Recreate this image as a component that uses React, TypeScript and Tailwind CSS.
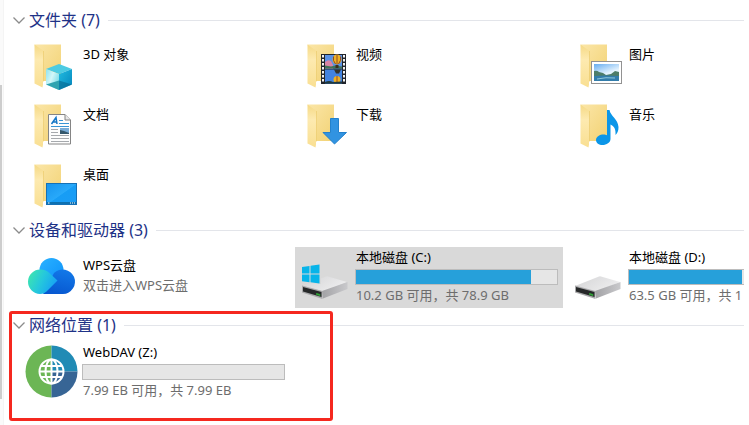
import { useState, type ReactNode } from "react";

function Folder({ id }: { id: string }) {
  return (
    <>
      <defs>
        <linearGradient id={`${id}-back`} x1="0" y1="0" x2="1" y2="1">
          <stop offset="0" stopColor="#fbe6a8" />
          <stop offset="1" stopColor="#f2d274" />
        </linearGradient>
        <linearGradient id={`${id}-flap`} x1="0" y1="0" x2="0" y2="1">
          <stop offset="0" stopColor="#f5d985" />
          <stop offset="0.35" stopColor="#fdeab0" />
          <stop offset="1" stopColor="#f9df92" />
        </linearGradient>
      </defs>
      <path d="M12.5 7.5H39V44H21Z" fill={`url(#${id}-back)`} />
      <path d="M12.5 7.5 21.5 14V45L20.5 50.5 12.5 46.5Z" fill={`url(#${id}-flap)`} />
      <path d="M21.5 14V44" stroke="#e9c766" strokeWidth="0.6" />
      <path d="M21 45h4v5l-4 1Z" fill="#fff" />
    </>
  );
}

function Icon({ children }: { children: ReactNode }) {
  return (
    <svg viewBox="0 0 60 60" className="size-[60px] shrink-0" aria-hidden="true">
      {children}
    </svg>
  );
}

const objectsIcon = (
  <Icon>
    <Folder id="objects" />
    <defs>
      <linearGradient id="cube-left" x1="0" y1="0" x2="1" y2="0.6">
        <stop offset="0" stopColor="#8fe3ee" />
        <stop offset="0.5" stopColor="#d3f7f9" />
        <stop offset="1" stopColor="#78dbe8" />
      </linearGradient>
      <linearGradient id="cube-right" x1="0" y1="0" x2="1" y2="1">
        <stop offset="0" stopColor="#22bce0" />
        <stop offset="1" stopColor="#0486bd" />
      </linearGradient>
    </defs>
    <path d="M24 32 37 27 50 32 37 37Z" fill="#4ccbe2" />
    <path d="M24 32 37 37V53L24 47.5Z" fill="url(#cube-left)" />
    <path d="M37 37 50 32V47.5L37 53Z" fill="url(#cube-right)" />
    <path d="M24 47.5 37 43.5V53Z" fill="#2fa3b0" />
    <path d="M37 43.5 50 47.5 37 53Z" fill="#05668e" opacity="0.6" />
  </Icon>
);

const sprockets = [18, 22, 26, 30, 34, 38, 42];

const videoIcon = (
  <Icon>
    <Folder id="video" />
    <rect x="26" y="17" width="25" height="30" fill="#20242b" />
    {sprockets.map((y) => (
      <g key={y} fill="#f2f2f2">
        <rect x="27" y={y} width="2" height="2.5" />
        <rect x="48" y={y} width="2" height="2.5" />
      </g>
    ))}
    <rect x="30" y="18" width="17" height="13.5" fill="#5a92e6" />
    <path d="M30 25q3-3 6-1l2 4v3.5h-8Z" fill="#d984a5" />
    <path d="M30 28.500l6 1 4-1 7 1v2H30Z" fill="#3f7358" />
    <ellipse cx="42" cy="22.500" rx="4.500" ry="5" fill="#eeb124" />
    <path d="M42 17.500v10M38.500 19.500q-1 4 2 7.500M45.500 19.500q1 4-2 7.500" fill="none" stroke="#8f4a24" />
    <path d="M40.500 28h3v3h-3Z" fill="#3a2f20" />
    <rect x="30" y="32.500" width="17" height="14" fill="#4383e0" />
    <path d="M39 32.500h7l-2 4h-3Z" fill="#35342c" />
    <ellipse cx="42" cy="42.500" rx="3.500" ry="3.500" fill="#eeb124" />
    <path d="M42 39v7" stroke="#9b4d22" />
    <path d="M30 45q4-2 8 0l9-.5v2H30Z" fill="#213a3d" />
  </Icon>
);

const picturesIcon = (
  <Icon>
    <Folder id="pictures" />
    <defs>
      <linearGradient id="sky" x1="0" y1="0" x2="0.5" y2="1">
        <stop offset="0" stopColor="#67adf0" />
        <stop offset="0.65" stopColor="#e4f3ff" />
      </linearGradient>
    </defs>
    <rect x="23.5" y="24.5" width="30" height="22" fill="#fff" stroke="#929292" />
    <rect x="26" y="27" width="25" height="17" fill="url(#sky)" />
    <path d="M26 34q3-1 5 1l4 1 3 2 5-1 4-3 4 1v5H26Z" fill="#4d7d69" />
    <path d="M26 39q11-1 25 0v5H26Z" fill="#337dab" />
    <path d="M29 42q9-2 18-1" stroke="#8dc7dc" fill="none" />
  </Icon>
);

const documentsIcon = (
  <Icon>
    <Folder id="documents" />
    <path d="M26.5 17.5H43L48.5 23V47H26.5Z" fill="#fdfdfd" stroke="#858585" />
    <path d="M43 17.5V23H48.5" fill="#e7e7e7" stroke="#858585" />
    <path d="M29.5 27 34 20.5 35 27M31 25h4" stroke="#1476c6" strokeWidth="1.5" fill="none" />
    <path d="M37 23.5h4M37 26.5h10M29 29.5h18" stroke="#3995d5" />
    <path d="M29 32.5h7M29 35.5h7M29 38.5h18M29 41.5h18M29 44.5h18" stroke="#a6a9ad" />
    <rect x="38" y="31" width="9" height="6" fill="#79acd7" />
    <path d="M38 33l4 1 5 2v1h-9Z" fill="#34576b" />
  </Icon>
);

const downloadsIcon = (
  <Icon>
    <Folder id="downloads" />
    <path d="M35.5 21.5h8v14h8L39.5 47 28 35.5h7.5Z" fill="#3193e1" stroke="#2381cc" />
  </Icon>
);

const musicIcon = (
  <Icon>
    <Folder id="music" />
    <path
      d="M39 13h2.5c1 6 8.500 9 9 17 .2 4-1.500 6.500-3 8 .5-6-1.500-9-5-10.500V42c0 3.500-4 6-8 6-3.500 0-6.500-2-6.500-5 0-3.500 4-5.500 7.500-5.500 1.500 0 2.500.2 3.500.7Z"
      fill="#0b96e8"
    />
  </Icon>
);

const desktopIcon = (
  <Icon>
    <Folder id="desktop" />
    <defs>
      <linearGradient id="screen" x1="0" y1="0" x2="1" y2="1">
        <stop offset="0" stopColor="#1794ed" />
        <stop offset="0.5" stopColor="#28a9fa" />
        <stop offset="0.52" stopColor="#179df5" />
        <stop offset="1" stopColor="#1b9cf5" />
      </linearGradient>
    </defs>
    <rect x="24.500" y="26.500" width="30" height="21" fill="url(#screen)" stroke="#1571b7" />
    <path d="M25 46h29" stroke="#0b6299" strokeWidth="1.500" />
    <path d="M26 46h1.500M48 46h1M50 46h1M52 46h1" stroke="#fff" />
  </Icon>
);

const cloudIcon = (
  <Icon>
    <defs>
      <linearGradient id="cloud-top" x1="0" y1="0" x2="1" y2="1">
        <stop offset="0" stopColor="#2ab2ff" />
        <stop offset="1" stopColor="#0d91fa" />
      </linearGradient>
      <linearGradient id="cloud-right" x1="0.600" y1="0" x2="0.300" y2="1">
        <stop offset="0" stopColor="#1278e8" />
        <stop offset="1" stopColor="#0757d0" />
      </linearGradient>
      <linearGradient id="cloud-left" x1="0" y1="0.300" x2="1" y2="0.700">
        <stop offset="0" stopColor="#3ce4b1" />
        <stop offset="0.450" stopColor="#25c8dc" />
        <stop offset="1" stopColor="#159cf8" />
      </linearGradient>
    </defs>
    <circle cx="29.500" cy="23" r="12" fill="url(#cloud-top)" />
    <path d="M21 47h20a12.300 12.300 0 1 0-9-21Z" fill="url(#cloud-right)" />
    <path d="M18.500 22.500c4 0 7 1.500 9.500 4l7.500 7L26 43c-2.500 2.500-4.500 4-8 4a12.200 12.200 0 0 1 .5-24.500Z" fill="url(#cloud-left)" />
  </Icon>
);

function DriveIcon({ id, system }: { id: string; system?: boolean }) {
  return (
    <Icon>
      <defs>
        <linearGradient id={`${id}-top`} x1="0" y1="0" x2="1" y2="0.500">
          <stop offset="0" stopColor="#d3d3d5" />
          <stop offset="1" stopColor="#ededee" />
        </linearGradient>
        <linearGradient id={`${id}-side`} x1="0" y1="0" x2="1" y2="0">
          <stop offset="0" stopColor="#a2a2a5" />
          <stop offset="1" stopColor="#c9c9cc" />
        </linearGradient>
      </defs>
      <path d="M7 39 31 29.500q1-.5 2 0L52 35 29 44.500Z" fill={`url(#${id}-top)`} />
      <path d="M27 44 52.500 35v7L28 51.500Z" fill={`url(#${id}-side)`} />
      <path d="M7 38.500 27.500 44V52L7 45.500Z" fill="#a9a9ab" />
      <path d="M8 40 26.500 45v5L8 44.500Z" fill="#262829" />
      <path d="M21.500 46.500 25 47.500v1L21.500 47.500Z" fill="#41d24b" stroke="#2e9b34" />
      {system && (
        <>
          <path d="M6 18H26V37L6 36Z" fill="#d9d9d9" />
          <path d="M7 20 14.500 19V26.500H7ZM15.500 18.800 24.500 17.500V26.500H15.500ZM7 27.500H14.500V35.200L7 34.200ZM15.500 27.500H24.500V36.500L15.500 35.300Z" fill="#08b4e9" />
        </>
      )}
    </Icon>
  );
}

const globeIcon = (
  <Icon>
    <path d="M29.500 3.500a26 26 0 0 0 0 52Z" fill="#6cb655" />
    <path d="M29.500 3.500a26 26 0 0 1 26 26h-26Z" fill="#208bb5" />
    <path d="M55.500 29.500a26 26 0 0 1-26 26v-26Z" fill="#376595" />
    <g fill="none" stroke="#fff" strokeWidth="2">
      <circle cx="29.500" cy="29.500" r="12" />
      <ellipse cx="29.500" cy="29.500" rx="6" ry="12" />
      <path d="M29.500 17.500v24M17.500 29.500h24M19 24h21M19 35h21" />
    </g>
  </Icon>
);

function Section({
  title,
  children,
  marked,
}: {
  title: string;
  children: ReactNode;
  marked?: boolean;
}) {
  const [open, setOpen] = useState(true);
  return (
    <section className="relative">
      <h2 className="flex h-[26px] items-center gap-2">
        <button
          type="button"
          aria-expanded={open}
          onClick={() => setOpen(!open)}
          className="flex items-center gap-1 text-base leading-6 text-[#1e3287]"
        >
          <svg viewBox="0 0 12 12" className="size-3" aria-hidden="true">
            <path d="M0.500 3.500 6 9 11.500 3.500" fill="none" stroke="#8b8b8b" strokeWidth="1.300" />
          </svg>
          {title}
        </button>
        <span className="h-px flex-1 bg-[#e3e5ea]" />
      </h2>
      {open && (
        <ul className="ml-[9px] mt-1 grid grid-cols-[repeat(3,268px)] gap-x-[5px]">{children}</ul>
      )}
      {marked && (
        <div className="pointer-events-none absolute -left-1 -top-px h-[110px] w-[324px] rounded-[3px] border-[3px] border-[#f5281f]" />
      )}
    </section>
  );
}

function FolderTile({ icon, name }: { icon: ReactNode; name: string }) {
  return (
    <li>
      <button type="button" className="flex h-[60px] w-full text-left">
        {icon}
        <span className="pl-px pt-2 leading-[18px]">{name}</span>
      </button>
    </li>
  );
}

function DriveTile({
  icon,
  name,
  detail,
  used,
  selected,
}: {
  icon: ReactNode;
  name: string;
  detail: string;
  used: number;
  selected?: boolean;
}) {
  return (
    <li className={selected ? "bg-[#d9d9d9]" : ""}>
      <button type="button" className="flex h-[61px] w-full text-left">
        {icon}
        <span className="flex w-[203px] flex-col">
          <span className="h-[22px] pl-px leading-5">{name}</span>
          <span
            role="meter"
            aria-label={name}
            aria-valuenow={used}
            aria-valuemin={0}
            aria-valuemax={100}
            className="block h-4 border border-[#bcbcbc] bg-[#e6e6e6]"
          >
            <span className="block h-full bg-[#26a0da]" style={{ width: `${used}%` }} />
          </span>
          <span className="whitespace-nowrap pl-px leading-5 text-[#6d6d6d]">{detail}</span>
        </span>
      </button>
    </li>
  );
}

export default function App() {
  return (
    <div className="flex min-h-screen bg-white font-['Noto_Sans','Noto_Sans_CJK_SC',sans-serif] text-[13px] text-black">
      <div className="flex w-1 shrink-0 flex-col border-r border-[#f4f4f4] bg-[#fafafa]">
        <span className="mt-[85px] h-[314px] w-0.5 bg-[#cdcdcd]" />
      </div>
      <main className="mr-[5px] min-w-0 flex-1 overflow-hidden pl-[9px] pt-[7px]">
        <Section title="文件夹 (7)">
          <FolderTile icon={objectsIcon} name="3D 对象" />
          <FolderTile icon={videoIcon} name="视频" />
          <FolderTile icon={picturesIcon} name="图片" />
          <FolderTile icon={documentsIcon} name="文档" />
          <FolderTile icon={downloadsIcon} name="下载" />
          <FolderTile icon={musicIcon} name="音乐" />
          <FolderTile icon={desktopIcon} name="桌面" />
        </Section>
        <Section title="设备和驱动器 (3)">
          <li>
            <button type="button" className="flex h-[61px] w-full text-left">
              {cloudIcon}
              <span className="flex flex-col pl-px pt-2 leading-5">
                <span>WPS云盘</span>
                <span className="text-[#6d6d6d]">双击进入WPS云盘</span>
              </span>
            </button>
          </li>
          <DriveTile
            icon={<DriveIcon id="drive-c" system />}
            name="本地磁盘 (C:)"
            detail="10.2 GB 可用，共 78.9 GB"
            used={87}
            selected
          />
          <DriveTile
            icon={<DriveIcon id="drive-d" />}
            name="本地磁盘 (D:)"
            detail="63.5 GB 可用，共 1"
            used={56}
          />
        </Section>
        <div className="mt-1">
          <Section title="网络位置 (1)" marked>
            <DriveTile
              icon={globeIcon}
              name="WebDAV (Z:)"
              detail="7.99 EB 可用，共 7.99 EB"
              used={0}
            />
          </Section>
        </div>
      </main>
    </div>
  );
}
